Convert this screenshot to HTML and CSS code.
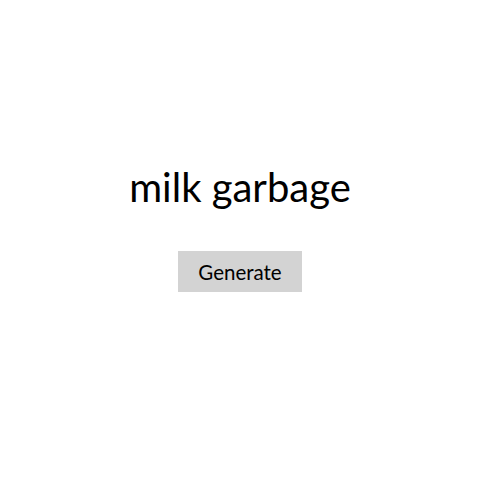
FILE: index.html
```html
<!DOCTYPE html>
<html>
<head>
<meta charset="utf-8">
<link rel="stylesheet" href="styles.css">
</head>
<body>
<main class="page">
  <h1 class="title">milk garbage</h1>
  <button class="generate">Generate</button>
</main>
</body>
</html>
```
FILE: styles.css
```css
html, body {
  margin: 0;
  padding: 0;
  background: #ffffff;
}
.page {
  display: flex;
  flex-direction: column;
  align-items: center;
  padding-top: 163px;
  font-family: Lato, "Liberation Sans", sans-serif;
  color: #000000;
}
.title {
  margin: 0;
  font-size: 40px;
  font-weight: 400;
  line-height: 48px;
}
.generate {
  margin-top: 40px;
  font-family: Lato, "Liberation Sans", sans-serif;
  font-size: 20.5px;
  line-height: 24px;
  color: #000000;
  background: #d3d3d3;
  border: none;
  padding: 9px 20px 8px;
}
```
